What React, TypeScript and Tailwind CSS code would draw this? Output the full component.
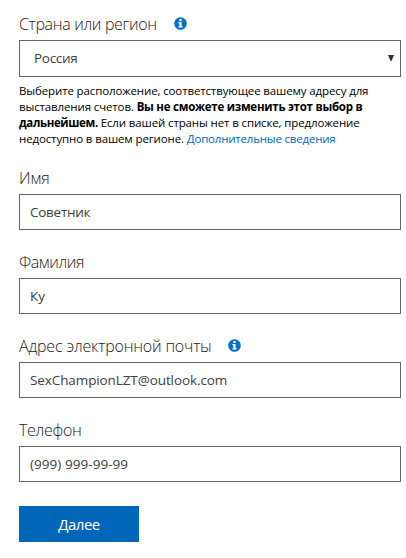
import type { ReactNode } from "react";

const InfoIcon = () => (
  <svg className="mb-px h-[13px] w-[13px]" viewBox="0 0 13 13" aria-hidden="true">
    <circle cx="6.5" cy="6.5" r="6.3" fill="#0072c6" />
    <rect x="5.3" y="2" width="2.3" height="2" fill="#fff" />
    <path d="M4.4 5h3.2v4.2h1v1.3H4.4V9.2h1v-3h-1z" fill="#fff" />
  </svg>
);

type LabelProps = {
  htmlFor: string;
  info?: boolean;
  tracking: string;
  children: ReactNode;
};

const Label = ({ htmlFor, info, tracking, children }: LabelProps) => (
  <div className="flex h-6 items-center gap-[17px]">
    <label htmlFor={htmlFor} className={`text-[16px] leading-6 font-light whitespace-nowrap text-[#1a1a1a] ${tracking}`}>
      {children}
    </label>
    {info && <InfoIcon />}
  </div>
);

const fields = [
  {
    id: "firstName",
    label: "Имя",
    value: "Советник",
    labelTracking: "tracking-normal",
    valueTracking: "tracking-[-0.27px]",
  },
  {
    id: "lastName",
    label: "Фамилия",
    value: "Ку",
    labelTracking: "tracking-[-0.4px]",
    valueTracking: "tracking-normal",
  },
  {
    id: "email",
    label: "Адрес электронной почты",
    value: "SexChampionLZT@outlook.com",
    info: true,
    labelTracking: "tracking-[-0.19px]",
    valueTracking: "tracking-[-0.1px]",
  },
  {
    id: "phone",
    label: "Телефон",
    value: "(999) 999-99-99",
    labelTracking: "tracking-[-0.3px]",
    valueTracking: "tracking-[0.05px]",
  },
];

export default function App() {
  return (
    <form className="h-[558px] w-[406px] overflow-hidden bg-white pt-3 pl-[19px] font-['Open_Sans','Noto_Sans',sans-serif] text-[#404040]">
      <Label htmlFor="country" tracking="tracking-[-0.33px]" info>
        Страна или регион
      </Label>
      <div className="relative mt-1 w-[382px]">
        <select
          id="country"
          className="block h-[37px] w-full appearance-none rounded-none border border-[#666] bg-white pl-[14px] text-[13.5px] tracking-[-0.3px] outline-none"
        >
          <option>Россия</option>
        </select>
        <svg className="pointer-events-none absolute top-[15px] right-[7px] h-[6px] w-[6px]" viewBox="0 0 6 6">
          <path d="M0 0h6L3.5 6h-1z" fill="#303030" />
        </svg>
      </div>
      <p className="mt-[6px] text-[11.5px] leading-4 tracking-[-0.13px] whitespace-nowrap text-black">
        Выберите расположение, соответствующее вашему адресу для
        <br />
        выставления счетов. <b className="tracking-[-0.25px]">Вы не сможете изменить этот выбор в</b>
        <br />
        <b className="tracking-[-0.35px]">дальнейшем.</b> Если вашей страны нет в списке, предложение
        <br />
        недоступно в вашем регионе.{" "}
        <a href="#" className="tracking-[-0.2px] text-[#0067b8]">
          Дополнительные сведения
        </a>
      </p>

      <div className="mt-[19px] flex flex-col gap-5">
        {fields.map((field) => (
          <div key={field.id}>
            <Label htmlFor={field.id} info={field.info} tracking={field.labelTracking}>
              {field.label}
            </Label>
            <input
              id={field.id}
              defaultValue={field.value}
              className={`mt-1 block h-9 w-[382px] border border-[#666] bg-white px-[10px] text-[13.5px] outline-none ${field.valueTracking}`}
            />
          </div>
        ))}
      </div>

      <button
        type="button"
        className="mt-6 block h-9 w-[120px] bg-[#0067b8] text-[15px] tracking-[-0.5px] text-white"
      >
        Далее
      </button>
    </form>
  );
}
